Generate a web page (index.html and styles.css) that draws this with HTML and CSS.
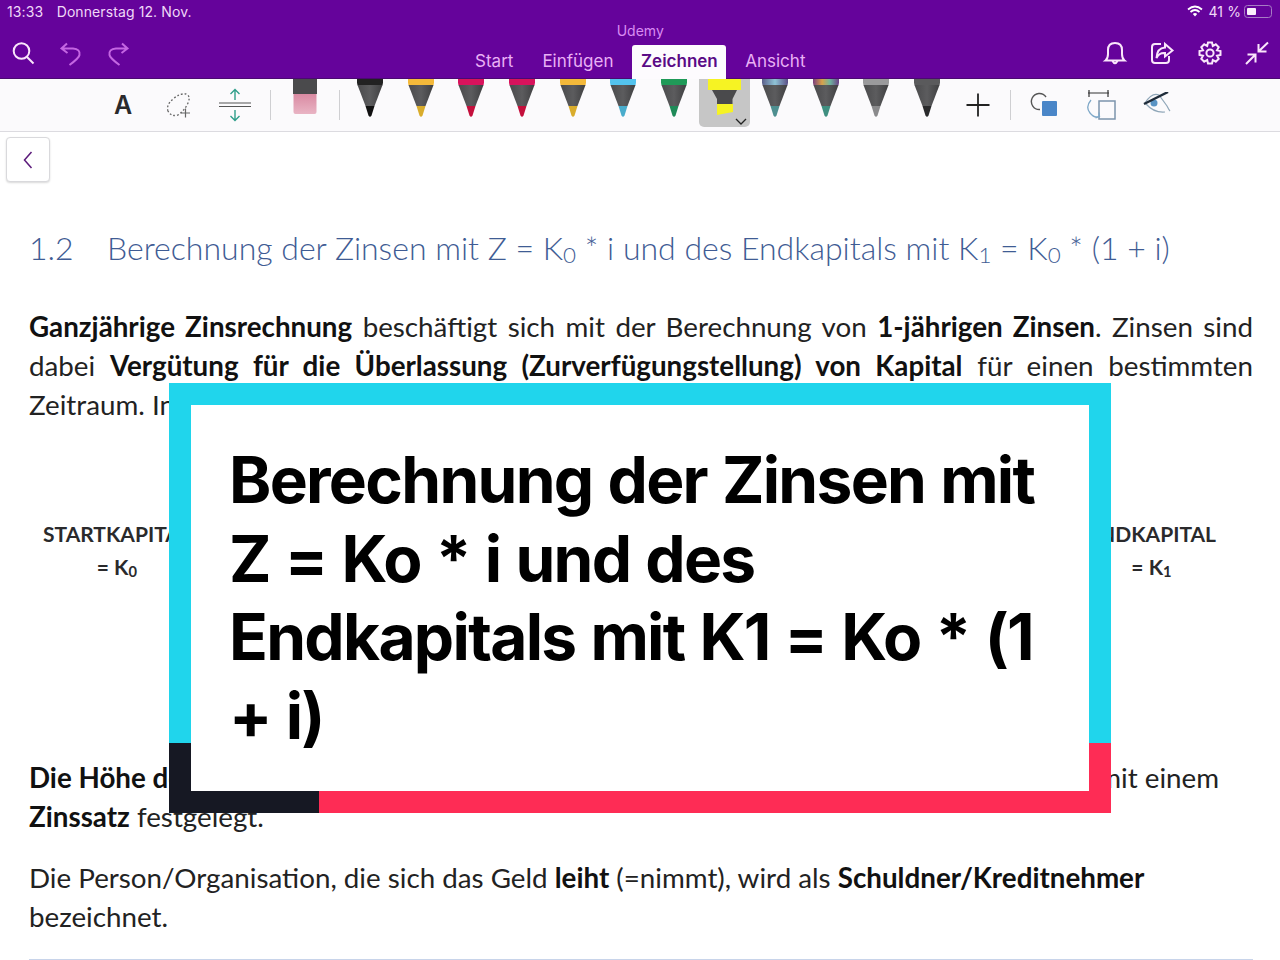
FILE: index.html
```html
<!DOCTYPE html>
<html lang="de">
<head>
  <meta charset="UTF-8">
  <title>Udemy - Zeichnen</title>
  <link rel="stylesheet" href="styles.css">
</head>
<body>
  <svg class="defs" width="0" height="0">
    <defs>
      <linearGradient id="rainbowA" x1="0" x2="1" y1="0" y2="0">
        <stop offset="0" stop-color="#5b5f8a"/><stop offset=".5" stop-color="#8fc4d6"/><stop offset="1" stop-color="#5a4f86"/>
      </linearGradient>
      <linearGradient id="rainbowB" x1="0" x2="1" y1="0" y2="0">
        <stop offset="0" stop-color="#7a3f7c"/><stop offset=".35" stop-color="#d8a24a"/><stop offset=".65" stop-color="#6fb6a0"/><stop offset="1" stop-color="#6b3f86"/>
      </linearGradient>
      <linearGradient id="cone" x1="0" x2="1" y1="0" y2="0">
        <stop offset="0" stop-color="#4a4a4c"/><stop offset=".5" stop-color="#5c5c5e"/><stop offset="1" stop-color="#3f3f41"/>
      </linearGradient>
      <linearGradient id="eraser" x1="0" x2="0" y1="0" y2="1">
        <stop offset="0" stop-color="#d98aa2"/><stop offset="1" stop-color="#e9b4c4"/>
      </linearGradient>
      <symbol id="pen" viewBox="0 0 28 39">
        <path class="pen-band" d="M1 0H27V3.500Q27 6 25.500 7H2.500Q1 6 1 3.500Z"/>
        <path class="pen-cone" d="M1.500 6H26.500L18.500 27H9.500Z"/>
        <path class="pen-tip" d="M9.500 27H18.500L15.500 36.500Q14 39 12.500 36.500Z"/>
      </symbol>
    </defs>
  </svg>

  <header class="app-header">
    <div class="status-bar">
      <span class="status-left"><span>13:33</span><span>Donnerstag 12. Nov.</span></span>
      <span class="status-right">
        <svg width="16" height="12" viewBox="0 0 16 12"><path d="M1 4.500Q8-1.500 15 4.500M3.500 7Q8 3 12.500 7" fill="none" stroke="#fff" stroke-width="1.800"/><path d="M5.800 9Q8 7.200 10.200 9L8 11.500Z" fill="#fff"/></svg>
        <span>41 %</span>
        <span class="battery"><span class="battery-level"></span></span>
      </span>
    </div>
    <div class="ribbon">
      <div class="ribbon-icons">
        <svg class="icon" width="26" height="26" viewBox="0 0 26 26"><circle cx="11.500" cy="11" r="7.800"/><path d="M17 17L23.500 23.500"/></svg>
        <svg class="icon icon-off" width="26" height="26" viewBox="0 0 26 26"><path d="M9 3.500L3.500 8.500L9.500 13M4 8.500H15Q22.500 9 21.500 15Q21 18 11.500 25"/></svg>
        <svg class="icon icon-off" width="26" height="26" viewBox="0 0 26 26"><path d="M17 3.500L22.500 8.500L16.500 13M22 8.500H11Q3.500 9 4.500 15Q5 18 14.500 25"/></svg>
      </div>
      <div class="ribbon-center">
        <div class="doc-title">Udemy</div>
        <nav class="tabs">
          <span class="tab">Start</span>
          <span class="tab">Einfügen</span>
          <span class="tab tab-active">Zeichnen</span>
          <span class="tab">Ansicht</span>
        </nav>
      </div>
      <div class="ribbon-icons">
        <svg class="icon" width="26" height="26" viewBox="0 0 26 26"><path d="M3.500 20.500H22.500Q20 18.500 20 14V10Q20 3 13 3T6 10V14Q6 18.500 3.500 20.500ZM10.500 21Q13 25.500 15.500 21"/></svg>
        <svg class="icon" width="26" height="26" viewBox="0 0 26 26"><path d="M12 4H6Q3 4 3 7V20Q3 23 6 23H17Q20 23 20 20V16M16 4L23.500 10.500L16 16.500V13Q10 12.500 7.500 18Q8 8 16 7.500Z"/></svg>
        <svg class="icon" width="26" height="26" viewBox="0 0 26 26"><circle cx="13" cy="13" r="3.600"/><path d="M11 2.500H15L15.800 6L18.800 4.300L21.700 7.200L20 10.200L23.500 11V15L20 15.800L21.700 18.800L18.800 21.700L15.800 20L15 23.500H11L10.200 20L7.200 21.700L4.300 18.800L6 15.800L2.500 15V11L6 10.200L4.300 7.200L7.200 4.300L10.200 6Z"/></svg>
        <svg class="icon" width="26" height="26" viewBox="0 0 26 26"><path d="M14.500 11.500L24 2.500M14.500 4V11.500H22.500M11.500 14.500L2 24M3.500 14.500H11.500V22.500"/></svg>
      </div>
    </div>
  </header>

  <div class="toolbar">
    <span class="tool tool-text">A</span>
    <span class="tool">
      <svg width="30" height="30" viewBox="0 0 30 30"><path d="M4 21Q2 15 9 9T22 4Q27 6 24 13T14 25Q7 27 4 21Z" fill="none" stroke="#666" stroke-width="1.300" stroke-dasharray="1.800 2"/><path d="M17 23H26M21.500 18.500V27.500" stroke="#666" stroke-width="1.200"/></svg>
    </span>
    <span class="tool">
      <svg width="34" height="34" viewBox="0 0 34 34"><path d="M1 15H33M1 18.500H33" stroke="#555" stroke-width="1.200"/><path d="M17 1.500V12M12.500 6L17 1.500L21.500 6M17 32.500V22M12.500 28L17 32.500L21.500 28" fill="none" stroke="#2f9e8a" stroke-width="1.400"/></svg>
    </span>
    <span class="divider divider-first"></span>
    <span class="tool tool-eraser">
      <svg width="26" height="36" viewBox="0 0 26 36"><rect x="1" width="24" height="15" fill="#4a4a4c"/><path d="M1.500 15H24.500V33Q24.500 35 22.500 35H3.500Q1.500 35 1.500 33Z" fill="url(#eraser)"/></svg>
    </span>
    <span class="divider divider-pens"></span>
    <span class="pen pen-black"><svg width="28" height="39"><use href="#pen"/></svg></span>
    <span class="pen pen-amber"><svg width="28" height="39"><use href="#pen"/></svg></span>
    <span class="pen pen-red"><svg width="28" height="39"><use href="#pen"/></svg></span>
    <span class="pen pen-red"><svg width="28" height="39"><use href="#pen"/></svg></span>
    <span class="pen pen-amber"><svg width="28" height="39"><use href="#pen"/></svg></span>
    <span class="pen pen-blue"><svg width="28" height="39"><use href="#pen"/></svg></span>
    <span class="pen pen-green"><svg width="28" height="39"><use href="#pen"/></svg></span>
    <span class="pen pen-marker">
      <svg width="33" height="37" viewBox="0 0 33 37"><rect width="33" height="11" fill="#f6f323"/><path d="M4 11H29L24.500 20V25H9V20Z" fill="#4a4a4c"/><path d="M9 25H25V33L9 36Z" fill="#f6f323"/></svg>
      <svg class="marker-chevron" width="12" height="7" viewBox="0 0 12 7"><path d="M1 1L6 6L11 1" fill="none" stroke="#222" stroke-width="1.300"/></svg>
    </span>
    <span class="pen pen-rainbow-a"><svg width="28" height="39"><use href="#pen"/></svg></span>
    <span class="pen pen-rainbow-b"><svg width="28" height="39"><use href="#pen"/></svg></span>
    <span class="pen pen-grey"><svg width="28" height="39"><use href="#pen"/></svg></span>
    <span class="pen pen-dark"><svg width="28" height="39"><use href="#pen"/></svg></span>
    <span class="tool tool-plus">
      <svg width="26" height="26" viewBox="0 0 26 26"><path d="M1.500 13H24.500M13 1.500V24.500" stroke="#222" stroke-width="1.800"/></svg>
    </span>
    <span class="divider"></span>
    <span class="tool">
      <svg width="30" height="30" viewBox="0 0 30 30"><path d="M10 19.500A8 8 0 1 1 16 7" fill="none" stroke="#555" stroke-width="1.400"/><rect x="12" y="11" width="15" height="15" rx="1" fill="#4a86c8"/></svg>
    </span>
    <span class="tool">
      <svg width="32" height="32" viewBox="0 0 32 32"><path d="M3 4H24M4 1V8M23 1V8" fill="none" stroke="#333" stroke-width="1.200"/><rect x="14" y="12" width="16" height="18" fill="none" stroke="#7c94ac" stroke-width="1.500"/><path d="M6 11Q0 18 5 24T14 27M14 23.500L14.500 27.500L10.500 29" fill="none" stroke="#7fa8c8" stroke-width="1.300"/></svg>
    </span>
    <span class="tool">
      <svg width="30" height="26" viewBox="0 2 30 26"><path d="M3 13Q10 2 17 5L25 16Q27 20 28 21M4 14Q12 23 23 22" fill="none" stroke="#8fa6b8" stroke-width="1.200"/><circle cx="12" cy="13" r="3.500" fill="#5a94c4"/><path d="M2 14L26 2" stroke="#1f2c3a" stroke-width="2.400"/></svg>
    </span>
  </div>

  <main class="page">
    <button class="back-btn" type="button">
      <svg width="12" height="20" viewBox="0 0 12 20"><path d="M9.500 2L2.500 10L9.500 18" fill="none" stroke="#5b1a7a" stroke-width="1.500"/></svg>
    </button>

    <h2 class="section-title"><span class="section-num">1.2</span>Berechnung der Zinsen mit Z = K<sub>0</sub> * i und des Endkapitals mit K<sub>1</sub> = K<sub>0</sub> * (1 + i)</h2>

    <p class="para">
      <span class="line-full"><b>Ganzjährige Zinsrechnung</b> beschäftigt sich mit der Berechnung von <b>1-jährigen Zinsen</b>. Zinsen sind</span>
      <span class="line-full">dabei <b>Vergütung für die Überlassung (Zurverfügungstellung) von Kapital</b> für einen bestimmten</span>
      <span class="line">Zeitraum. In</span>
    </p>

    <div class="diagram">
      <div class="diagram-label">
        <span>STARTKAPITAL</span>
        <span>= K<sub>0</sub></span>
      </div>
      <div class="diagram-label">
        <span>ENDKAPITAL</span>
        <span>= K<sub>1</sub></span>
      </div>
    </div>

    <p class="para para-split">
      <span class="line-split"><b>Die Höhe der</b><span>mit einem</span></span>
      <span class="line"><b>Zinssatz</b> festgelegt.</span>
    </p>

    <p class="para para-last">
      <span class="line">Die Person/Organisation, die sich das Geld <b>leiht</b> (=nimmt), wird als <b>Schuldner/Kreditnehmer</b></span>
      <span class="line">bezeichnet.</span>
    </p>

    <div class="page-rule"></div>
  </main>

  <div class="caption">
    <div class="caption-inner">Berechnung der Zinsen mit Z = Ko * i und des Endkapitals mit K1 = Ko * (1 + i)</div>
  </div>
</body>
</html>
```

FILE: styles.css
```css
* { margin: 0; padding: 0; box-sizing: border-box; }

html, body {
  height: 960px;
  overflow: hidden;
}

body {
  font-family: 'Inter', sans-serif;
  background: #fff;
  color: #1c1c1e;
  position: relative;
}

.defs {
  position: absolute;
}

/* Kopfzeile */
.app-header {
  height: 79px;
  background: #65039b;
  color: #fff;
  border-bottom: 1px solid #4a0a70;
}

.status-bar {
  height: 22px;
  padding: 2.500px 8px 0 7px;
  display: flex;
  justify-content: space-between;
  font-size: 14px;
  letter-spacing: 0.1px;
  line-height: 17px;
  color: #f0d8f8;
}

.status-left {
  display: flex;
  gap: 13.500px;
}

.status-right {
  display: flex;
  align-items: center;
  gap: 5px;
  height: 17px;
}

.battery {
  width: 28px;
  height: 13px;
  margin-left: -2px;
  border: 1px solid #a77cc4;
  border-radius: 3.500px;
  padding: 2px;
  display: block;
}

.battery-level {
  display: block;
  width: 9px;
  height: 7px;
  background: #fbeefc;
  border-radius: 1px;
}

.ribbon {
  height: 56px;
  display: flex;
  justify-content: space-between;
  padding: 0 10px;
}

.ribbon-icons {
  display: flex;
  gap: 21.500px;
  padding-top: 18px;
}

.icon {
  fill: none;
  stroke: #fae6fb;
  stroke-width: 2;
}

.icon-off {
  stroke: #c466e2;
}

.ribbon-center {
  width: 400px;
  margin-left: 48px;
  text-align: center;
}

.doc-title {
  font-size: 14px;
  line-height: 18px;
  height: 22px;
  color: #d98cf2;
}

.tabs {
  display: flex;
  justify-content: center;
  height: 34px;
  margin-top: 1px;
}

.tab {
  padding: 3px 14.500px 0;
  font-size: 17px;
  line-height: 27px;
  color: #e9b0f5;
}

.tab-active {
  padding: 3px 8.500px 0;
  margin: 0 4.500px;
  background: #fdfbfe;
  color: #5a0a86;
  font-weight: 600;
  border-radius: 3px 3px 0 0;
}

/* Werkzeugleiste */
.toolbar {
  height: 53px;
  background: #fbfafc;
  border-bottom: 1px solid #dcdbe0;
  display: flex;
  align-items: center;
  padding-left: 95px;
}

.tool {
  width: 56px;
  height: 52px;
  display: flex;
  align-items: center;
  justify-content: center;
  flex: none;
}

.tool-text {
  font-size: 25px;
  font-weight: 600;
  color: #2a2a2c;
}

.tool-eraser {
  align-items: flex-start;
}

.tool-plus {
  width: 51.500px;
}

.divider {
  width: 1px;
  height: 30px;
  margin: 0 6px;
  background: #cfcfd2;
  flex: none;
}

.divider-first {
  margin-left: 7px;
}

.divider-pens {
  margin-right: 5px;
}

.pen {
  width: 50.600px;
  height: 52px;
  flex: none;
  display: flex;
  justify-content: center;
  align-items: flex-start;
  position: relative;
  --band: #222;
  --tip: #111;
}

.pen-band { fill: var(--band); }
.pen-cone { fill: url(#cone); }
.pen-tip { fill: var(--tip); }

.pen-amber { --band: #f4b93a; --tip: #d9ac2c; }
.pen-red { --band: #d8135c; --tip: #c40f3c; }
.pen-blue { --band: #53c3ee; --tip: #4aaccc; }
.pen-green { --band: #1f9a58; --tip: #1f8a58; }
.pen-rainbow-a { --band: url(#rainbowA); --tip: #4e8f90; }
.pen-rainbow-b { --band: url(#rainbowB); --tip: #3f8f80; }
.pen-grey { --band: #9a9a9c; --tip: #8a8a8c; }
.pen-dark { --band: #5a5a5c; --tip: #2a2a2c; }

.pen-marker {
  background: #c6c6c6;
  border-radius: 0 0 5px 5px;
  height: 48px;
  align-self: flex-start;
}

.marker-chevron {
  position: absolute;
  right: 3px;
  bottom: 2px;
}

/* Dokument */
.page {
  padding: 5px 27px 0 29px;
  font-family: 'Lato', sans-serif;
  font-size: 27.750px;
  line-height: 39px;
  color: #222;
}

.page b {
  font-weight: 700;
  color: #111;
}

.page sub {
  font-size: 0.7em;
  line-height: 0;
  vertical-align: -0.15em;
}

.back-btn {
  display: flex;
  align-items: center;
  justify-content: center;
  width: 44px;
  height: 45px;
  margin-left: -23px;
  background: #fff;
  border: 1px solid #d9d9dc;
  border-radius: 4px;
  box-shadow: 0 1px 2px rgba(0, 0, 0, 0.15);
}

.section-title {
  margin-top: 46px;
  font-size: 32px;
  font-weight: 300;
  line-height: 40px;
  color: #3f5c94;
  white-space: nowrap;
}

.section-num {
  display: inline-block;
  width: 78px;
}

.para {
  margin-top: 39px;
}

.line,
.line-full,
.line-split {
  display: block;
  white-space: nowrap;
}

.line-full {
  white-space: normal;
  text-align: justify;
  text-align-last: justify;
}

.line-split {
  display: flex;
  justify-content: space-between;
  padding-right: 34px;
}

.diagram {
  height: 334px;
  padding: 93px 37px 0 14px;
  display: flex;
  justify-content: space-between;
  font-weight: 700;
  font-size: 21px;
  line-height: 33px;
  color: #2a2a2c;
}

.diagram-label {
  display: flex;
  flex-direction: column;
  align-items: center;
}

.para-split {
  margin-top: 0;
}

.para-last {
  margin-top: 22px;
}

.page-rule {
  margin-top: 23px;
  height: 1px;
  background: #c8d4ea;
}

/* Overlay */
.caption {
  position: absolute;
  left: 169px;
  top: 383px;
  width: 942px;
  height: 430px;
  padding: 22px;
  background:
    linear-gradient(#fe2c55, #fe2c55) right bottom / 792px 70px no-repeat,
    linear-gradient(#161823, #161823) left bottom / 150px 70px no-repeat,
    #20d5ec;
}

.caption-inner {
  height: 100%;
  background: #fff;
  padding: 36px 36px 0 38px;
  font-size: 64px;
  font-weight: 700;
  line-height: 78.500px;
  letter-spacing: -1.700px;
  word-spacing: 1.500px;
  color: #000;
}
```
